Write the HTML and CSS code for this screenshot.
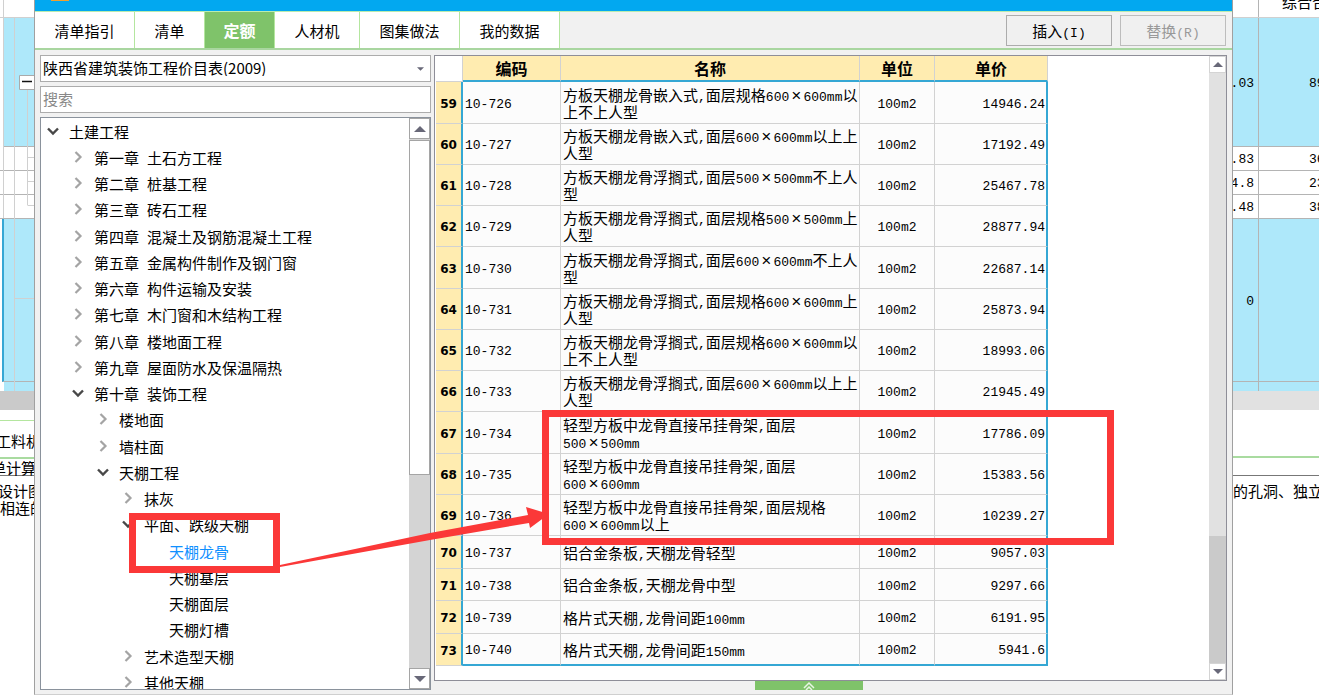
FILE: index.html
```html
<!DOCTYPE html>
<html lang="zh-CN">
<head>
<meta charset="utf-8">
<title>定额查询</title>
<link rel="stylesheet" href="styles.css">
</head>
<body>
<svg class="defs" aria-hidden="true">
  <symbol id="open" viewBox="0 0 12 12"><path d="M1 3.5 6 8.5 11 3.5" fill="none" stroke="#484848" stroke-width="2.4"/></symbol>
  <symbol id="closed" viewBox="0 0 12 12"><path d="M3.500 1 8.500 6 3.500 11" fill="none" stroke="#a4a4a4" stroke-width="2.200"/></symbol>
  <symbol id="up" viewBox="0 0 12 6"><path d="M0 6 6 0 12 6z" fill="#686878"/></symbol>
  <symbol id="down" viewBox="0 0 12 6"><path d="M0 0 6 6 12 0z" fill="#686878"/></symbol>
</svg>
<div class="screen">
  <div class="under under-left">
    <div class="band head"></div>
    <div class="band tall"></div>
    <div class="band row"></div>
    <div class="band row"></div>
    <div class="band row"></div>
    <div class="band zero current"></div>
    <div class="band rest"></div>
    <div class="hbar"></div>
    <div class="gap"></div>
    <div class="subtab">工料机</div>
    <div class="subhead">清单计算</div>
    <div class="notes">设计图<br>相连的</div>
    <svg class="lines" width="34" height="400" viewBox="0 0 34 400" aria-hidden="true">
      <path d="M3.500 0V218M14.500 18V391M27.500 90V205M27.500 157.500H34M27.500 181.500H34M27.500 205.500H34M15 298.500H34" fill="none" stroke="#d0d0d0"/>
      <path d="M19.500 75.500H36V89.500H19.500z" fill="#fff" stroke="#aaa"/>
      <path d="M22 81.500H32" stroke="#111" stroke-width="1.500"/>
    </svg>
  </div>

  <main class="dialog">
    <div class="titlebar"><span class="logo"></span></div>
    <header class="toolbar">
      <nav class="tabs">
        <button class="tab w4">清单指引</button>
        <button class="tab w2">清单</button>
        <button class="tab w2 active">定额</button>
        <button class="tab w3">人材机</button>
        <button class="tab w4">图集做法</button>
        <button class="tab w4">我的数据</button>
      </nav>
      <div class="actions">
        <button class="action">插入<span class="n">(I)</span></button>
        <button class="action" disabled>替换<span class="n">(R)</span></button>
      </div>
    </header>
    <div class="body">
      <aside class="side">
        <div class="combo">
          <select aria-label="定额库"><option>陕西省建筑装饰工程价目表(2009)</option></select>
          <svg class="combo-arrow" width="7" height="4"><use href="#down"/></svg>
        </div>
        <input class="search" type="text" placeholder="搜索" aria-label="搜索">
        <div class="tree-box">
          <ul class="tree">
            <li class="l0"><button aria-label="折叠"><svg><use href="#open"/></svg></button>土建工程</li>
            <li class="l1"><button aria-label="展开"><svg><use href="#closed"/></svg></button>第一章<i></i>土石方工程</li>
            <li class="l1"><button aria-label="展开"><svg><use href="#closed"/></svg></button>第二章<i></i>桩基工程</li>
            <li class="l1"><button aria-label="展开"><svg><use href="#closed"/></svg></button>第三章<i></i>砖石工程</li>
            <li class="l1"><button aria-label="展开"><svg><use href="#closed"/></svg></button>第四章<i></i>混凝土及钢筋混凝土工程</li>
            <li class="l1"><button aria-label="展开"><svg><use href="#closed"/></svg></button>第五章<i></i>金属构件制作及钢门窗</li>
            <li class="l1"><button aria-label="展开"><svg><use href="#closed"/></svg></button>第六章<i></i>构件运输及安装</li>
            <li class="l1"><button aria-label="展开"><svg><use href="#closed"/></svg></button>第七章<i></i>木门窗和木结构工程</li>
            <li class="l1"><button aria-label="展开"><svg><use href="#closed"/></svg></button>第八章<i></i>楼地面工程</li>
            <li class="l1"><button aria-label="展开"><svg><use href="#closed"/></svg></button>第九章<i></i>屋面防水及保温隔热</li>
            <li class="l1"><button aria-label="折叠"><svg><use href="#open"/></svg></button>第十章<i></i>装饰工程</li>
            <li class="l2"><button aria-label="展开"><svg><use href="#closed"/></svg></button>楼地面</li>
            <li class="l2"><button aria-label="展开"><svg><use href="#closed"/></svg></button>墙柱面</li>
            <li class="l2"><button aria-label="折叠"><svg><use href="#open"/></svg></button>天棚工程</li>
            <li class="l3"><button aria-label="展开"><svg><use href="#closed"/></svg></button>抹灰</li>
            <li class="l3"><button aria-label="折叠"><svg><use href="#open"/></svg></button>平面、跌级天棚</li>
            <li class="l4 selected">天棚龙骨</li>
            <li class="l4">天棚基层</li>
            <li class="l4">天棚面层</li>
            <li class="l4">天棚灯槽</li>
            <li class="l3"><button aria-label="展开"><svg><use href="#closed"/></svg></button>艺术造型天棚</li>
            <li class="l3"><button aria-label="展开"><svg><use href="#closed"/></svg></button>其他天棚</li>
          </ul>
          <div class="scroll scroll-tree">
            <button aria-label="向上"><svg width="12" height="6"><use href="#up"/></svg></button>
            <div class="thumb"></div>
            <div class="track"></div>
            <button aria-label="向下"><svg width="12" height="6"><use href="#down"/></svg></button>
          </div>
        </div>
      </aside>
      <section class="content">
        <div class="grid-box">
          <div class="grid-area">
          <table class="grid">
            <colgroup><col class="c-no"><col class="c-code"><col class="c-name"><col class="c-unit"><col class="c-price"></colgroup>
            <thead><tr><td></td><th>编码</th><th>名称</th><th>单位</th><th>单价</th></tr></thead>
            <tbody>
              <tr><th>59</th><td>10-726</td><td>方板天棚龙骨嵌入式<span class="n">,</span>面层规格<span class="n">600<b>×</b>600mm</span>以上不上人型</td><td>100m2</td><td>14946.24</td></tr>
              <tr><th>60</th><td>10-727</td><td>方板天棚龙骨嵌入式<span class="n">,</span>面层<span class="n">600<b>×</b>600mm</span>以上上人型</td><td>100m2</td><td>17192.49</td></tr>
              <tr><th>61</th><td>10-728</td><td>方板天棚龙骨浮搁式<span class="n">,</span>面层<span class="n">500<b>×</b>500mm</span>不上人型</td><td>100m2</td><td>25467.78</td></tr>
              <tr><th>62</th><td>10-729</td><td>方板天棚龙骨浮搁式<span class="n">,</span>面层规格<span class="n">500<b>×</b>500mm</span>上人型</td><td>100m2</td><td>28877.94</td></tr>
              <tr><th>63</th><td>10-730</td><td>方板天棚龙骨浮搁式<span class="n">,</span>面层<span class="n">600<b>×</b>600mm</span>不上人型</td><td>100m2</td><td>22687.14</td></tr>
              <tr><th>64</th><td>10-731</td><td>方板天棚龙骨浮搁式<span class="n">,</span>面层规格<span class="n">600<b>×</b>600mm</span>上人型</td><td>100m2</td><td>25873.94</td></tr>
              <tr><th>65</th><td>10-732</td><td>方板天棚龙骨浮搁式<span class="n">,</span>面层规格<span class="n">600<b>×</b>600mm</span>以上不上人型</td><td>100m2</td><td>18993.06</td></tr>
              <tr><th>66</th><td>10-733</td><td>方板天棚龙骨浮搁式<span class="n">,</span>面层<span class="n">600<b>×</b>600mm</span>以上上人型</td><td>100m2</td><td>21945.49</td></tr>
              <tr><th>67</th><td>10-734</td><td>轻型方板中龙骨直接吊挂骨架<span class="n">,</span>面层<br><span class="n">500<b>×</b>500mm</span></td><td>100m2</td><td>17786.09</td></tr>
              <tr><th>68</th><td>10-735</td><td>轻型方板中龙骨直接吊挂骨架<span class="n">,</span>面层<br><span class="n">600<b>×</b>600mm</span></td><td>100m2</td><td>15383.56</td></tr>
              <tr><th>69</th><td>10-736</td><td>轻型方板中龙骨直接吊挂骨架<span class="n">,</span>面层规格<br><span class="n">600<b>×</b>600mm</span>以上</td><td>100m2</td><td>10239.27</td></tr>
              <tr class="short"><th>70</th><td>10-737</td><td>铝合金条板<span class="n">,</span>天棚龙骨轻型</td><td>100m2</td><td>9057.03</td></tr>
              <tr class="short"><th>71</th><td>10-738</td><td>铝合金条板<span class="n">,</span>天棚龙骨中型</td><td>100m2</td><td>9297.66</td></tr>
              <tr class="short"><th>72</th><td>10-739</td><td>格片式天棚<span class="n">,</span>龙骨间距<span class="n">100mm</span></td><td>100m2</td><td>6191.95</td></tr>
              <tr class="short"><th>73</th><td>10-740</td><td>格片式天棚<span class="n">,</span>龙骨间距<span class="n">150mm</span></td><td>100m2</td><td>5941.6</td></tr>
            </tbody>
          </table>
          </div>
          <div class="scroll scroll-grid">
            <button aria-label="向上"><svg width="10" height="5"><use href="#up"/></svg></button>
            <div class="track"></div>
            <div class="thumb"></div>
            <button aria-label="向下"><svg width="10" height="5"><use href="#down"/></svg></button>
          </div>
        </div>
        <button class="handle" aria-label="展开面板"><svg width="14" height="9" viewBox="0 0 14 9"><path d="M2 7 7 2 12 7M4 9 7 6 10 9" fill="none" stroke="#e8f6e4" stroke-width="1.500"/></svg></button>
      </section>
    </div>
  </main>

  <div class="under under-right">
    <div class="band head"><span></span><span>综合合价</span></div>
    <div class="band tall"><span>.03</span><span>89</span></div>
    <div class="band row"><span>.83</span><span>36</span></div>
    <div class="band row"><span>4.8</span><span>23</span></div>
    <div class="band row"><span>.48</span><span>38</span></div>
    <div class="band zero"><span>0</span><span></span></div>
    <div class="band rest"><span></span><span></span></div>
    <div class="hbar"></div>
    <div class="gap"></div>
    <div class="subhead"></div>
    <div class="notes">的孔洞、独立</div>
  </div>
</div>
<svg class="marks" width="1319" height="695" viewBox="0 0 1319 695" aria-hidden="true">
  <g fill="none" stroke="#fb3838" stroke-width="7">
    <rect x="132.500" y="516.500" width="144" height="53"/>
    <rect x="545.500" y="413.500" width="565" height="128"/>
  </g>
  <path d="M280 565 430 533 528 515 526 507 549 514 530 528 529 523 430 540 280 567z" fill="#fb3838"/>
</svg>
</body>
</html>
```

FILE: styles.css
```css
* { box-sizing: border-box; }
body {
  margin: 0;
  position: relative;
  overflow: hidden;
  background: #fff;
  color: #000;
  font: 15px/17px "Noto Sans CJK SC", sans-serif;
}
button, input, select { font: inherit; color: inherit; margin: 0; border-radius: 0; }
button { padding: 0; border: 0; background: none; }
.defs { position: absolute; width: 0; height: 0; }
.n { font-family: "Liberation Mono", monospace; font-size: 13px; line-height: 0; }
.n b { font-weight: normal; font-size: 17px; padding: 0 2px; }

.screen { display: flex; height: 100vh; }

/* Main window behind the dialog */
.under { position: relative; overflow: hidden; white-space: nowrap; display: flex; flex-direction: column; }
.under-left { width: 34px; flex: none; }
.under-right { width: 86px; flex: none; }
.under > div { flex: none; }
.band { display: flex; align-items: center; border-bottom: 1px solid #b4b4b4; }
.band span { flex: none; font: 13px/17px "Liberation Mono", monospace; }
.band span:first-child {
  width: 26px;
  height: 100%;
  display: flex;
  align-items: center;
  justify-content: flex-end;
  padding: 2px 4px 0 0;
  border-right: 1px solid #b4b4b4;
}
.band span + span { padding: 2px 0 0 50px; }
.band.head { height: 18px; border-color: #d0d0d0; }
.band.head span + span { font: 15px/17px "Noto Sans CJK SC", sans-serif; padding: 0 0 14px 23px; }
.tall { height: 129px; background: #aee8fa; }
.row { height: 24px; }
.zero { height: 163px; background: #aee8fa; }
.rest { height: 9px; background: #aee8fa; border: 0; }
.hbar { height: 19px; background: #e1e1e1; }
.gap { height: 48px; border-bottom: 2px solid #a9dba0; }
.subhead { height: 18px; border-bottom: 1px solid #777; }
.notes { padding-top: 6px; }
.under-left .tall, .under-left .rest { margin-left: 4px; }
.under-left .current { border-left: 2px solid #35a7d4; margin-left: 2px; }
.under-left .hbar { background: #cacaca; }
.under-left .gap { height: 11px; border-bottom: 1px solid #b4e69f; }
.under-left .subtab { height: 38px; padding-top: 11px; border-bottom: 2px solid #a9dba0; text-indent: -4px; }
.under-left .subhead { height: 17px; text-indent: -24px; }
.under-left .notes { text-indent: -2px; }
.lines { position: absolute; left: 0; top: 0; }

/* Dialog frame */
.dialog {
  flex: 1;
  min-width: 0;
  display: flex;
  flex-direction: column;
  background: #f1f1f1;
  border: 1px solid #a0a0a0;
  border-top: 0;
  border-bottom-color: #cfcfcf;
}
.titlebar { height: 11px; background: #02a8f0; padding-left: 16px; flex: none; }
.logo { display: block; width: 18px; height: 1px; background: #f0a030; }
.toolbar {
  flex: none;
  display: flex;
  justify-content: space-between;
  height: 39px;
  border-top: 1px solid #b9ecb0;
  border-bottom: 2px solid #a9d6a0;
}
.tabs { display: flex; }
.tab { background: #fff; border-right: 1px solid #b4e69f; }
.w2 { width: 70px; }
.w3 { width: 85px; }
.w4 { width: 100px; }
.tab.active { background: #7fc36a; color: #fff; font-weight: bold; font-size: 16px; }
.actions { display: flex; gap: 8px; padding: 3px 6px 2px 0; }
.action { width: 106px; height: 31px; border: 1px solid #acacac; background: #f0f0f0; }
.action:disabled { color: #999; border-color: #bdbdbd; }

.body { flex: 1; min-height: 0; display: flex; gap: 3px; padding: 5px 5px 4px; }
.side { width: 391px; flex: none; display: flex; flex-direction: column; gap: 4px; }
.combo { position: relative; height: 27px; flex: none; }
.combo select, .search {
  display: block;
  width: 100%;
  height: 27px;
  appearance: none;
  border: 1px solid #acacac;
  background: #fff;
  padding: 0 2px 2px;
  outline: 0;
}
.combo-arrow { position: absolute; right: 7px; top: 12px; }
.search { flex: none; }
.search::placeholder { color: #888; opacity: 1; }
.tree-box { flex: 1; min-height: 0; display: flex; border: 1px solid #8a929c; background: #fff; }
.tree { flex: 1; min-width: 0; overflow: hidden; list-style: none; margin: 0; padding: 0; }
.tree li { display: flex; align-items: center; height: 26px; white-space: nowrap; }
.tree li:nth-child(4n) { margin-bottom: 1px; }
.tree li button { width: 12px; height: 12px; margin-right: 10px; }
.tree li svg { display: block; width: 12px; height: 12px; }
.tree i { width: 8px; }
.tree .l0 { padding-left: 6px; }
.tree .l1 { padding-left: 31px; }
.tree .l2 { padding-left: 56px; }
.tree .l3 { padding-left: 81px; }
.tree .l4 { padding-left: 128px; }
.selected { color: #1090ff; }

.scroll { flex: none; display: flex; flex-direction: column; }
.scroll button { flex: none; display: flex; align-items: center; justify-content: center; background: #fff; border: 1px solid #a5a5a5; }
.scroll-tree { width: 21px; background: #d4d4d4; }
.scroll-tree button { height: 21px; }
.scroll-tree .thumb { flex: 334; margin-top: 1px; background: #fff; border: 1px solid #a5a5a5; }
.scroll-tree .track { flex: 193; }
.scroll-grid { width: 17px; background: #e1e1e1; }
.scroll-grid button { height: 17px; border-color: #d4d4d4; }
.scroll-grid .track { flex: 463; }
.scroll-grid .thumb { flex: 127; background: #cacaca; }

/* Price list */
.content { flex: 1; min-width: 0; display: flex; flex-direction: column; }
.grid-box { flex: 1; min-height: 0; display: flex; border: 1px solid #8e8e98; background: #fff; }
.grid-area { flex: 1; min-width: 0; overflow: hidden; padding-left: 1px; }
.grid { width: 612px; table-layout: fixed; border-collapse: separate; border-spacing: 0; }
.c-no { width: 27px; }
.c-code { width: 98px; }
.c-name { width: 299px; }
.c-unit { width: 75px; }
.c-price { width: 113px; }
.grid td, .grid th { padding: 0 2px; border-right: 1px solid #d2d2d2; border-bottom: 1px solid #d2d2d2; }
.grid thead tr { height: 26px; }
.grid thead th { background: #ffecb0; font-size: 16px; border-bottom: 2px solid #35a7d4; }
.grid tbody tr { height: 41px; }
.grid tbody tr:nth-child(4n + 1) { height: 42px; }
.grid tbody tr.short { height: 32px; }
.grid tbody tr.short:nth-child(even) { height: 33px; }
.grid tbody td { background: #fcfcfc; font-family: "Liberation Mono", monospace; font-size: 13px; padding-top: 3px; }
.grid tbody td:nth-child(3) { font-family: "Noto Sans CJK SC", sans-serif; font-size: 15px; padding: 0 0 0 2px; }
.grid tbody td:nth-child(4) { text-align: center; }
.grid tbody td:nth-child(5) { text-align: right; padding-right: 1px; border-right: 2px solid #35a7d4; }
.grid tbody th { background: #ffecb0; font: bold 12px/17px "DejaVu Sans", sans-serif; padding-top: 3px; border-right: 2px solid #35a7d4; }
.grid tbody tr:last-child td { border-bottom: 2px solid #35a7d4; }
.handle { width: 108px; height: 9px; background: #7fc36a; align-self: center; display: flex; justify-content: center; margin-right: 44px; }

.marks { position: absolute; left: 0; top: 0; pointer-events: none; }
```
